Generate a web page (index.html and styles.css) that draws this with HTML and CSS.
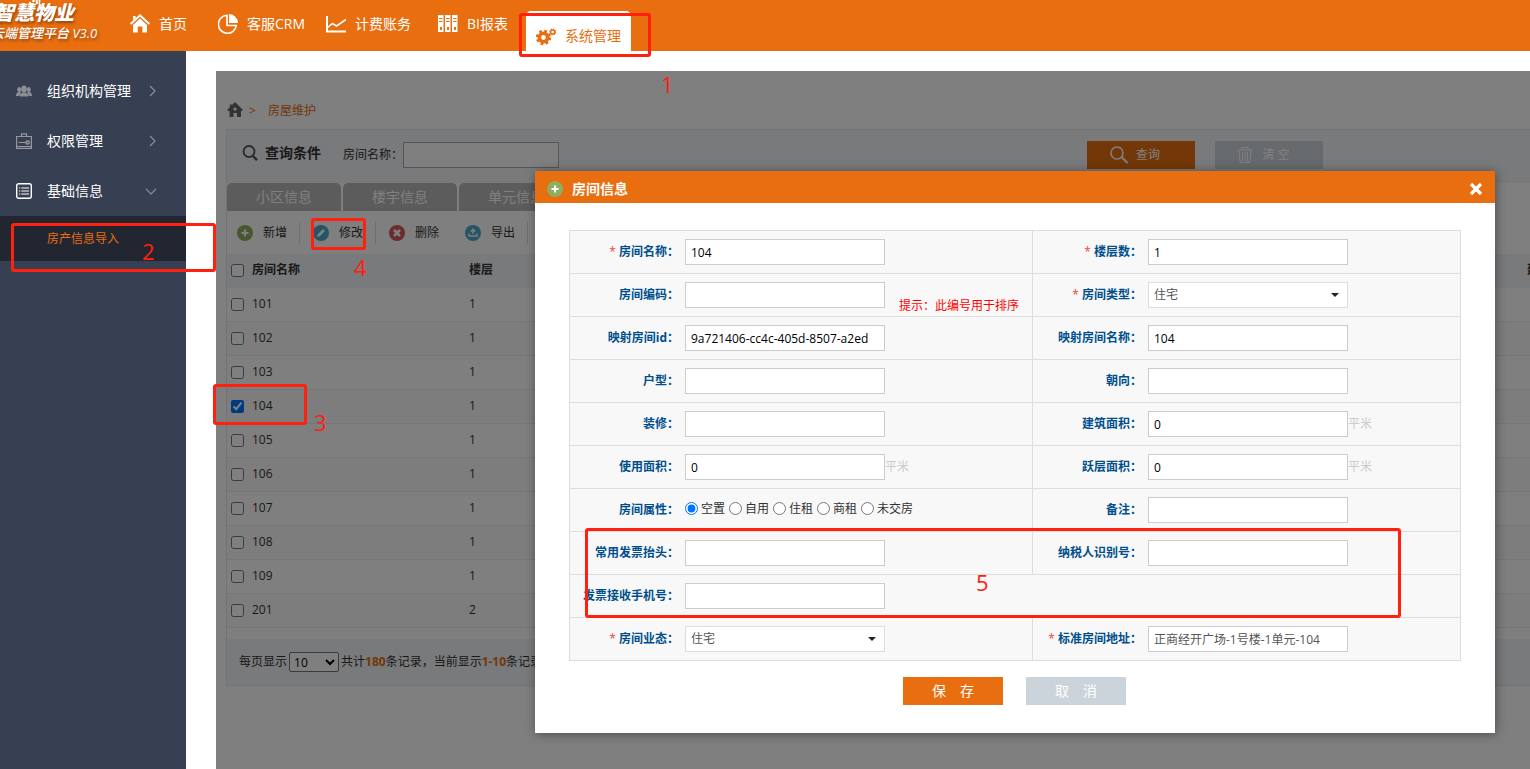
FILE: index.html
```html
<!DOCTYPE html>
<html lang="zh-CN">
<head>
<meta charset="utf-8">
<title>智慧物业云端管理平台</title>
<link rel="stylesheet" href="styles.css">
</head>
<body>
<header class="topbar">
  <div class="logo">
    <svg class="logo-mark" viewBox="0 0 14 5" aria-hidden="true"><circle cx="2" cy="3" r="1.2"/><circle cx="5.500" cy="1" r="1.300"/><path d="M7.500 0h2l1 4H8zM10.500 0h2l-.5 4h-1z"/></svg>
    <strong class="logo-name">智慧物业</strong>
    <span class="logo-sub">云端管理平台 V3.0</span>
  </div>
  <nav class="nav">
    <a class="nav-item" href="#"><svg viewBox="0 0 20 20"><path fill="#fff" d="M10 0 20 9.300 18.700 10.700 10 2.800 1.300 10.700 0 9.300 3 6.600V2h2.600v2.200z"/><path fill="#fff" d="M10 4.500 17 11v7.500h-4.600V12.500H7.800v6H3V11z"/></svg>首页</a>
    <a class="nav-item" href="#"><svg viewBox="0 0 20 20"><path fill="none" stroke="#fff" stroke-width="1.600" d="M9 1.300a9 9 0 1 0 9.300 10.200H9z"/><path fill="#fff" d="M11 0a9 9 0 0 1 9 9h-9z"/></svg>客服CRM</a>
    <a class="nav-item" href="#"><svg viewBox="0 0 20 20"><path fill="none" stroke="#fff" stroke-width="2" d="M1 2v15.500h19"/><path fill="none" stroke="#fff" stroke-width="1.600" d="M1 14l5.500-4.500 4 2.500L20 5.500"/></svg>计费账务</a>
    <a class="nav-item" href="#"><svg viewBox="0 0 20 20"><path fill="#fff" fill-rule="evenodd" d="M0 1h5.500v17H0zM7 1h5.500v17H7zM14 1h5.500v17H14zM1 4v1h3.500V4zm0 3v1h3.500V7zm7-3v1h3.500V4zm0 3v1h3.500V7zm7-3v1h3.500V4zm0 3v1h3.500V7zM2 13v3h2v-3zm7 0v3h2v-3zm7 0v3h2v-3z"/></svg>BI报表</a>
    <a class="nav-item nav-active" href="#"><svg viewBox="0 0 20 20"><circle cx="7.500" cy="11.500" r="6.400" fill="none" stroke="#e86e10" stroke-width="2.600" stroke-dasharray="2.600 2.430"/><circle cx="7.500" cy="11.500" r="4.200" fill="none" stroke="#e86e10" stroke-width="3.600"/><circle cx="16.700" cy="6" r="2.900" fill="none" stroke="#e86e10" stroke-width="1.200" stroke-dasharray="1.300 .98"/><circle cx="16.700" cy="6" r="2" fill="none" stroke="#e86e10" stroke-width="1.400"/></svg>系统管理</a>
  </nav>
</header>

<div class="shell">
  <aside class="sidebar">
    <a class="menu-item" href="#"><svg class="menu-icon" viewBox="0 0 16 16"><g fill="#8c8e92"><ellipse cx="8" cy="6" rx="2.800" ry="3.600"/><path d="M3.600 13.500c0-3 2-3.300 3-4h2.800c1 .7 3 1 3 4z"/><ellipse cx="3.200" cy="6.500" rx="2" ry="2.500"/><ellipse cx="12.800" cy="6.500" rx="2" ry="2.500"/><path d="M0 13c0-2.800 1-3 2.300-4H5L3.300 13zM16 13c0-2.800-1-3-2.300-4H11l1.700 4z"/></g></svg><span class="menu-text">组织机构管理</span><svg class="arrow" viewBox="0 0 12 12"><path d="M4 1l5 5-5 5"/></svg></a>
    <a class="menu-item" href="#"><svg class="menu-icon" viewBox="0 0 16 16"><g fill="none" stroke="#96989b"><path d="M.6 3.500h14.800v11.900H.6zM5.500 3V.8h5V3" stroke-width="1.200"/><path d="M2.500 9.500H10M.6 13.500h14.800" stroke-width="1.200"/><circle cx="11.600" cy="9.500" r="1.600" stroke-width="1.500"/></g></svg><span class="menu-text">权限管理</span><svg class="arrow" viewBox="0 0 12 12"><path d="M4 1l5 5-5 5"/></svg></a>
    <a class="menu-item" href="#"><svg class="menu-icon" viewBox="0 0 16 16"><g fill="none" stroke="#fff"><rect x=".7" y=".7" width="14.600" height="14.600" rx="2" stroke-width="1.400"/><path d="M3 5h1.200M5.300 5H13M3 8h1.200M5.300 8H13M3 11h1.200M5.300 11H13"/></g></svg><span class="menu-text">基础信息</span><svg class="arrow" viewBox="0 0 12 12"><path d="M0 4l5 5 5-5"/></svg></a>
    <a class="submenu-item" href="#">房产信息导入</a>
  </aside>

  <main class="main">
    <div class="frame">
      <div class="page">
        <div class="crumbs">
          <svg viewBox="0 0 16 16"><path fill="#666" fill-rule="evenodd" d="M8 0 16 8l-1.500 1H14v6h-4v-4H6.500v4H2.500V9H1.500L0 8l2.800-2.800V2.500H5V3zM8 5.500a1.600 1.600 0 1 0 .01 0z"/></svg>
          <span>&gt;</span><a href="#">房屋维护</a>
        </div>

        <section class="panel">
          <form class="search">
            <svg class="lens" viewBox="0 0 16 16"><circle cx="7" cy="6.500" r="5.500" fill="none" stroke="#555" stroke-width="1.800"/><path d="M11 11l4 4.200" stroke="#555" stroke-width="2.400"/></svg>
            <strong class="search-title">查询条件</strong>
            <label for="q-room">房间名称：</label>
            <input class="search-input" id="q-room" type="text">
            <div class="search-actions">
              <button class="tool-button query" type="button"><svg viewBox="0 0 18 18"><circle cx="7" cy="7" r="6" fill="none" stroke="#fff" stroke-width="1.600"/><path d="M11.500 11l6 6" stroke="#fff" stroke-width="2"/></svg>查询</button>
              <button class="tool-button clear" type="button"><svg viewBox="0 0 18 18"><path fill="none" stroke="#fff" d="M1.500 4h15M6 3.500V1.500h6v2M3 4.500 4.200 16.500h9.600L15 4.500M6.500 6v9M9 6v9M11.500 6v9"/></svg>清 空</button>
            </div>
          </form>
          <div class="tabs">
            <button class="tab" type="button">小区信息</button>
            <button class="tab" type="button">楼宇信息</button>
            <button class="tab" type="button">单元信息</button>
          </div>
          <div class="toolbar">
            <button class="tool" type="button"><svg viewBox="0 0 16 16"><circle cx="8" cy="8" r="8" fill="#8fae5f"/><path d="M8 4.500v7M4.500 8h7" stroke="#fff" stroke-width="2"/></svg>新增</button>
            <button class="tool" type="button"><svg viewBox="0 0 16 16"><circle cx="8" cy="8" r="8" fill="#4aa8cc"/><path d="M4 12l.8-2.800L10 4l2 2-5.200 5.200z" fill="#fff"/></svg>修改</button>
            <button class="tool" type="button"><svg viewBox="0 0 16 16"><circle cx="8" cy="8" r="8" fill="#d9585a"/><path d="M5 5l6 6M11 5l-6 6" stroke="#fff" stroke-width="2.600"/></svg>删除</button>
            <button class="tool" type="button"><svg viewBox="0 0 16 16"><circle cx="8" cy="8" r="8" fill="#4aa8cc"/><path d="M8 9V4.500M5.800 6.500 8 4.200l2.200 2.300M4 8.500V11h8V8.500" fill="none" stroke="#fff" stroke-width="1.400"/></svg>导出</button>
          </div>
          <table class="rooms">
            <colgroup><col class="col-check"><col class="col-name"><col class="col-floor"><col></colgroup>
            <thead><tr><th><input type="checkbox" aria-label="全选"></th><th>房间名称</th><th>楼层</th><th>建筑面积</th></tr></thead>
            <tbody>
              <tr><td><input type="checkbox" aria-label="101"></td><td>101</td><td>1</td><td></td></tr>
              <tr><td><input type="checkbox" aria-label="102"></td><td>102</td><td>1</td><td></td></tr>
              <tr><td><input type="checkbox" aria-label="103"></td><td>103</td><td>1</td><td></td></tr>
              <tr><td><input type="checkbox" aria-label="104" checked></td><td>104</td><td>1</td><td></td></tr>
              <tr><td><input type="checkbox" aria-label="105"></td><td>105</td><td>1</td><td></td></tr>
              <tr><td><input type="checkbox" aria-label="106"></td><td>106</td><td>1</td><td></td></tr>
              <tr><td><input type="checkbox" aria-label="107"></td><td>107</td><td>1</td><td></td></tr>
              <tr><td><input type="checkbox" aria-label="108"></td><td>108</td><td>1</td><td></td></tr>
              <tr><td><input type="checkbox" aria-label="109"></td><td>109</td><td>1</td><td></td></tr>
              <tr><td><input type="checkbox" aria-label="201"></td><td>201</td><td>2</td><td></td></tr>
            </tbody>
          </table>
          <div class="pager">
            <label for="page-size">每页显示</label>
            <select id="page-size"><option>10</option></select>
            <span>共计<b>180</b>条记录，当前显示<b>1-10</b>条记录</span>
          </div>
        </section>
      </div>
      <div class="mask"></div>

      <section class="dialog" role="dialog" aria-labelledby="dialog-title">
        <header class="dialog-head">
          <svg viewBox="0 0 16 16"><circle cx="8" cy="8" r="8" fill="#8fae5f"/><path d="M8 4.500v7M4.500 8h7" stroke="#fff" stroke-width="2"/></svg>
          <h2 id="dialog-title">房间信息</h2>
          <button class="close" type="button" aria-label="关闭"><svg viewBox="0 0 14 14"><path d="M2 2l10 10M12 2 2 12" stroke="#fff" stroke-width="3.200"/></svg></button>
        </header>
        <form class="dialog-body">
          <div class="fields">
            <div class="field"><label for="f1"><i>*</i> 房间名称：</label><input id="f1" type="text" value="104"></div>
            <div class="field"><label for="f2"><i>*</i> 楼层数：</label><input id="f2" type="text" value="1"></div>
            <div class="field"><label for="f3">房间编码：</label><input id="f3" type="text"><span class="hint">提示：此编号用于排序</span></div>
            <div class="field"><label for="f4"><i>*</i> 房间类型：</label><span class="select"><select id="f4"><option>住宅</option></select></span></div>
            <div class="field"><label for="f5">映射房间id：</label><input id="f5" type="text" value="9a721406-cc4c-405d-8507-a2ed"></div>
            <div class="field"><label for="f6">映射房间名称：</label><input id="f6" type="text" value="104"></div>
            <div class="field"><label for="f7">户型：</label><input id="f7" type="text"></div>
            <div class="field"><label for="f8">朝向：</label><input id="f8" type="text"></div>
            <div class="field"><label for="f9">装修：</label><input id="f9" type="text"></div>
            <div class="field"><label for="f10">建筑面积：</label><input id="f10" type="text" value="0"><span class="unit">平米</span></div>
            <div class="field"><label for="f11">使用面积：</label><input id="f11" type="text" value="0"><span class="unit">平米</span></div>
            <div class="field"><label for="f12">跃层面积：</label><input id="f12" type="text" value="0"><span class="unit">平米</span></div>
            <div class="field" role="radiogroup" aria-labelledby="attr"><span class="label" id="attr">房间属性：</span>
              <div class="radios">
                <label><input type="radio" name="attr" checked>空置</label>
                <label><input type="radio" name="attr">自用</label>
                <label><input type="radio" name="attr">住租</label>
                <label><input type="radio" name="attr">商租</label>
                <label><input type="radio" name="attr">未交房</label>
              </div>
            </div>
            <div class="field"><label for="f14">备注：</label><input id="f14" type="text"></div>
            <div class="field"><label for="f15">常用发票抬头：</label><input id="f15" type="text"></div>
            <div class="field"><label for="f16">纳税人识别号：</label><input id="f16" type="text"></div>
            <div class="field field-wide"><label for="f17">发票接收手机号：</label><input id="f17" type="text"></div>
            <div class="field"><label for="f18"><i>*</i> 房间业态：</label><span class="select"><select id="f18"><option>住宅</option></select></span></div>
            <div class="field"><label for="f19"><i>*</i> 标准房间地址：</label><input class="soft" id="f19" type="text" value="正商经开广场-1号楼-1单元-104"></div>
          </div>
          <div class="dialog-actions">
            <button class="save" type="button">保　存</button>
            <button class="cancel" type="button">取　消</button>
          </div>
        </form>
      </section>
    </div>
  </main>
</div>

<div class="mark mark-1"></div><span class="step step-1">1</span>
<div class="mark mark-2"></div><span class="step step-2">2</span>
<div class="mark mark-3"></div><span class="step step-3">3</span>
<div class="mark mark-4"></div><span class="step step-4">4</span>
<div class="mark mark-5"></div><span class="step step-5">5</span>
</body>
</html>
```
FILE: styles.css
```css
* { box-sizing: border-box; }
body {
  margin: 0;
  min-height: 100vh;
  display: flex;
  flex-direction: column;
  position: relative;
  overflow: hidden;
  background: #fff;
  color: #333;
  font: 12px/18px "Open Sans", "Noto Sans CJK SC", sans-serif;
}
a { text-decoration: none; color: inherit; }
button, input, select { font: inherit; color: inherit; }
button { border: 0; padding: 0; background: none; }
svg { flex: none; display: block; }
input[type="checkbox"], input[type="radio"] { width: 13px; height: 13px; margin: 0; }

/* top bar */
.topbar { height: 51px; display: flex; background: #e86e10; color: #fff; overflow: hidden; }
.logo { position: relative; width: 120px; flex: none; font-style: italic; text-shadow: 1px 2px 3px #8a4310; white-space: nowrap; }
.logo-name { display: block; margin-left: -6px; font-size: 20px; line-height: 25px; font-weight: 900; }
.logo-sub { display: block; margin-left: -9px; font-size: 13px; line-height: 16px; font-weight: 500; }
.logo-mark { position: absolute; left: 28px; top: 0; width: 14px; height: 5px; fill: #fff; }
.nav { display: grid; grid-template-columns: 88px 108px 112px 88px 105px; padding-left: 10px; font-size: 14px; }
.nav-item { display: flex; align-items: center; gap: 9px; height: 48px; white-space: nowrap; }
.nav-item svg { width: 20px; height: 20px; }
.nav-active { height: 50px; margin-top: 11px; padding-left: 10px; border-radius: 5px 5px 0 0; background: #fff; color: #e86e10; }

/* side menu */
.shell { flex: 1; display: flex; }
.sidebar { width: 186px; flex: none; padding-top: 15px; background: #364052; color: #fff; }
.menu-item { height: 50px; display: flex; align-items: center; padding: 0 28px 0 16px; font-size: 14px; }
.menu-icon { width: 16px; height: 16px; margin-right: 15px; }
.menu-text { flex: 1; }
.arrow { width: 12px; height: 12px; fill: none; stroke: #7d93af; stroke-width: 1.2; }
.submenu-item { height: 45px; display: flex; align-items: center; padding-left: 47px; background: #222631; color: #e86e10; }

/* content */
.main { flex: 1; min-width: 0; display: flex; padding: 20px 0 0 30px; }
.frame { flex: 1; min-width: 0; position: relative; overflow: hidden; }
.page { width: calc(100% + 280px); padding: 30px 10px 0; }
.mask { position: absolute; inset: 0; background: rgba(0, 0, 0, 0.5); }
.crumbs { display: flex; align-items: center; height: 20px; padding-left: 1px; color: #e86e10; }
.crumbs svg { width: 16px; height: 16px; margin: 0 6px 2px 0; }
.crumbs a { margin-left: 12px; }
.panel { margin-top: 8px; border: 1px solid #e3e6ea; }
.search { display: flex; align-items: center; height: 53px; padding: 0 0 3px 15px; background: #f2f4f8; }
.lens { width: 16px; height: 16px; margin: 0 7px 4px 0; }
.search-title { font-size: 14px; margin: 0 22px 4px 0; }
.search-input { width: 156px; height: 26px; border: 1px solid #aaa; background: #fff; }
.search-actions { display: flex; gap: 20px; margin-left: 528px; }
.tool-button { width: 108px; height: 28px; display: flex; align-items: center; justify-content: center; gap: 8px; padding-right: 12px; color: #fff; }
.tool-button svg { width: 18px; height: 18px; }
.query { background: #e86e10; }
.clear { background: #ccd4db; }
.tabs { display: flex; gap: 2px; background: #fff; }
.tab { width: 114px; height: 28px; border-radius: 5px 5px 0 0; background: #b8b8b8; color: #fff; font-size: 14px; }
.toolbar { height: 43px; display: flex; align-items: center; gap: 13px; padding-left: 10px; background: #fff; }
.tool { height: 22px; display: flex; align-items: center; gap: 10px; padding-right: 12px; border-right: 1px solid #ddd; }
.tool svg { width: 16px; height: 16px; }
.tool:nth-child(3) { border-right-color: transparent; }
.rooms { width: 100%; table-layout: fixed; border-collapse: collapse; }
.rooms th, .rooms td { height: 34px; padding: 0; text-align: left; border-bottom: 1px solid #ececec; }
.rooms th { height: 33px; border-color: #f2f4f8; background: #f2f4f8; }
.rooms tbody tr:nth-child(even) { background: #fbfbfb; }
.rooms td:first-child, .rooms th:first-child { padding-left: 4px; }
.rooms input { display: block; }
.col-check { width: 25px; }
.col-name { width: 217px; }
.col-floor { width: 1058px; }
.pager { display: flex; align-items: center; height: 46px; margin-top: 11px; padding-left: 12px; background: #f2f4f8; gap: 2px; }
.pager select { width: 50px; height: 20px; border: 1px solid #767676; border-radius: 2px; background: #fff; color: #000; }
.pager b { color: #e86e10; }

/* dialog */
.dialog { position: absolute; top: 100px; right: 35px; width: 960px; background: #fff; box-shadow: 1px 1px 10px rgba(0, 0, 0, 0.4); }
.dialog-head { height: 32px; display: flex; align-items: center; gap: 9px; padding: 4px 12px 0; background: #e86e10; color: #fff; }
.dialog-head svg { width: 16px; height: 16px; }
.dialog-head h2 { flex: 1; margin: 0; font-size: 14px; line-height: 20px; }
.dialog-head .close svg { width: 14px; height: 14px; }
.dialog-body { padding: 27px 34px 28px; }
.fields { display: grid; grid-template-columns: 463fr 428fr; border: solid #ddd; border-width: 1px 0 0 1px; background: #f8f8f8; }
.field { height: 43px; display: flex; align-items: center; border: solid #ddd; border-width: 0 1px 1px 0; }
.field-wide { grid-column: span 2; }
.field > label, .label { width: 109px; margin-right: 6px; text-align: right; font-weight: 700; color: #004f8c; white-space: nowrap; }
.field i { font-style: normal; font-weight: 400; color: #e8483f; }
.field > input, .select select { width: 200px; height: 26px; padding: 0 5px; border: 1px solid #ccc; border-radius: 0; background: #fff; color: #000; outline: 0; }
.field > input.soft { color: #555; }
.select { position: relative; }
.select select { display: block; appearance: none; border-color: #ddd; color: #555; }
.select::after { content: ""; position: absolute; right: 9px; top: 11px; border: solid transparent; border-width: 4px 4px 0; border-top-color: #222; }
.hint { align-self: flex-end; margin: 0 0 1px 14px; color: #f00; }
.unit { color: #ccc; }
.radios { display: flex; gap: 4px; padding-bottom: 3px; }
.radios label { display: flex; align-items: center; gap: 3px; }
.dialog-actions { display: flex; justify-content: center; gap: 23px; margin-top: 16px; padding-right: 1px; }
.dialog-actions button { width: 100px; height: 28px; color: #fff; font-size: 14px; }
.dialog-actions .save { background: #e86e10; }
.dialog-actions .cancel { background: #ccd4db; }

/* numbered callouts laid over the screen */
.mark { position: absolute; border: 3px solid #ff2010; border-radius: 3px; }
.mark-1 { left: 519px; top: 13px; width: 132px; height: 44px; }
.mark-2 { left: 11px; top: 223px; width: 205px; height: 49px; }
.mark-3 { left: 213px; top: 384px; width: 94px; height: 41px; }
.mark-4 { left: 311px; top: 218px; width: 55px; height: 32px; }
.mark-5 { left: 585px; top: 528px; width: 816px; height: 90px; }
.step { position: absolute; color: #ff2010; font-size: 22px; line-height: 24px; }
.step-1 { left: 661px; top: 72px; }
.step-2 { left: 142px; top: 239px; }
.step-3 { left: 314px; top: 410px; }
.step-4 { left: 354px; top: 255px; }
.step-5 { left: 976px; top: 570px; }
```
